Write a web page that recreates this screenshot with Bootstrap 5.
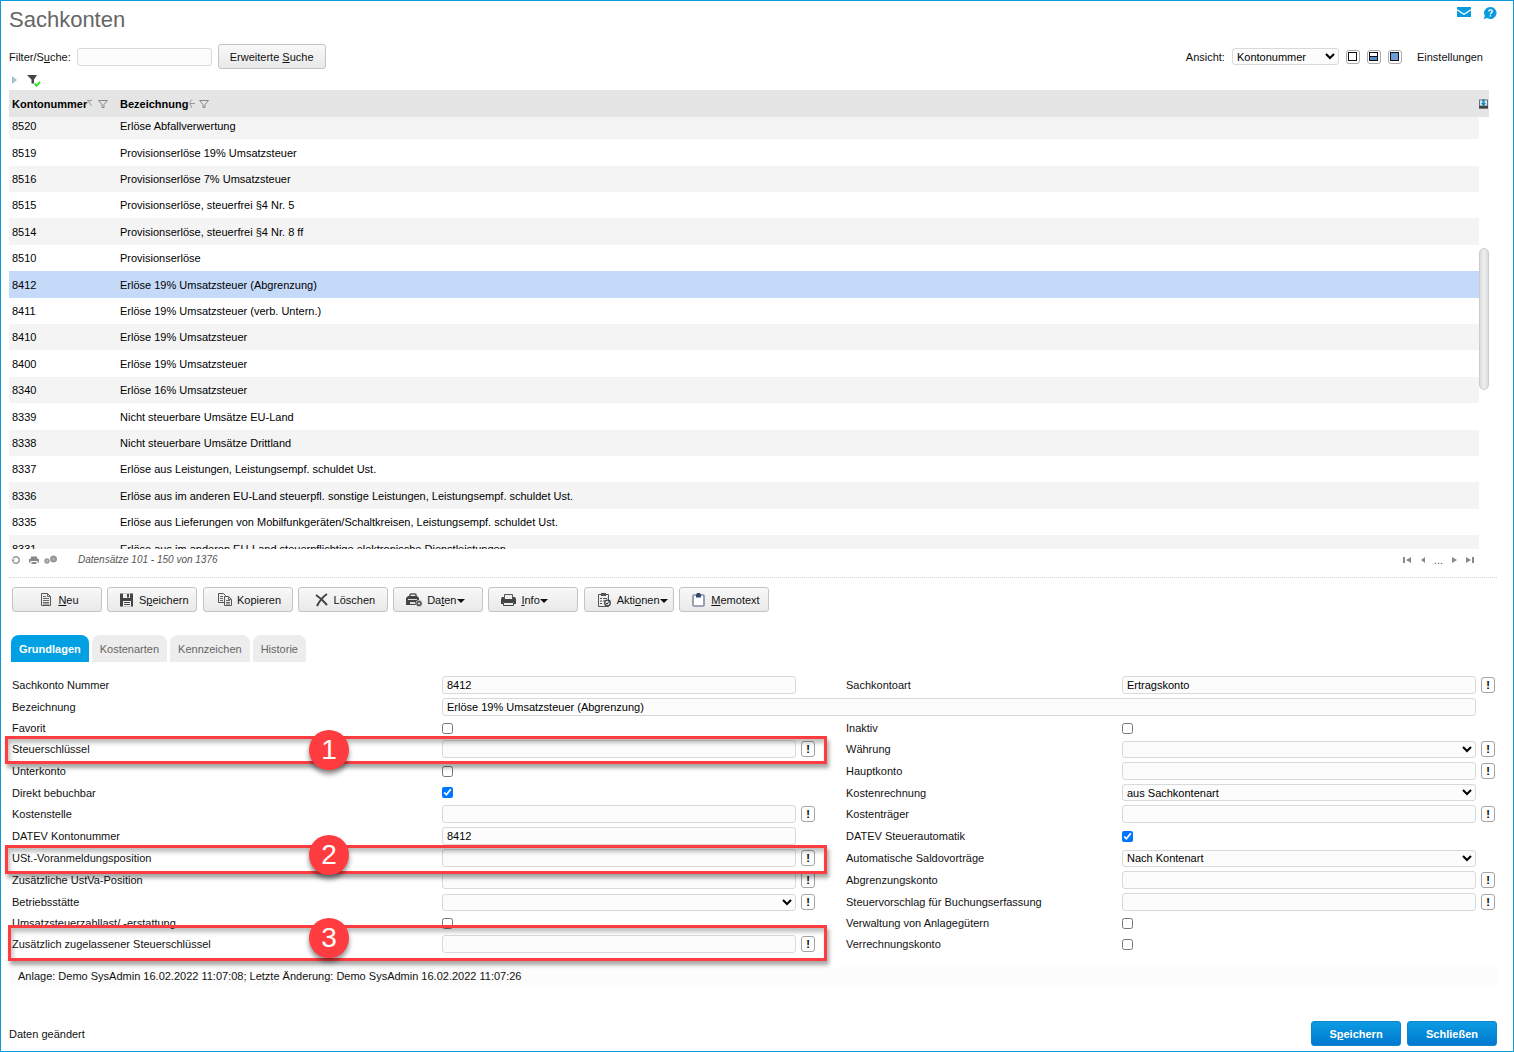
<!DOCTYPE html>
<html lang="de">
<head>
<meta charset="utf-8">
<meta name="viewport" content="width=device-width, initial-scale=1">
<title>Sachkonten</title>
<link href="https://cdn.jsdelivr.net/npm/bootstrap@5.3.0/dist/css/bootstrap.min.css" rel="stylesheet">
<style>
  body { font-family: "Liberation Sans", Arial, sans-serif; font-size: 11px; line-height: 14px; color: #111; background: #fff; }
  .page { min-height: 100vh; border: 1px solid #0a9bdc; padding: 4px 16px 5px 8px; }
  .page-title { font-size: 22px; line-height: 30px; color: #666; font-weight: 400; }
  .page a { color: inherit; text-decoration: none; }
  .top-icons { padding-top: 1px; gap: 12px; }
  svg { display: block; flex: none; }

  .field { font-size: 11px; line-height: 14px; height: 18px; min-height: 0; padding: 0 4px; border: 1px solid #d9d9d9; border-radius: 3px; background: #fcfcfc; color: #000; min-width: 0; width: 100%; }
  select.field { padding: 0; height: 17px; }
  .search-row { margin-top: 9px; padding-right: 14px; }
  .search-form { gap: 6px; }
  .search-field { width: 135px; }
  .view-field { width: 107px; }
  .view-group { gap: 7px; }
  .tool-btn { font-size: 11px; line-height: 14px; height: 25px; padding: 0 2px; color: #111; border: 1px solid #c4c4c4; border-radius: 3px; background: linear-gradient(#f8f8f8, #e9e9e9); }
  .tool-btn:hover { border-color: #999; color: #111; }
  .search-btn { padding: 0 11px; }
  .toolbar-row { margin-top: 9px; padding-left: 3px; }
  .toolbar-list { max-width: 757px; }
  .toolbar-list .tool-btn { width: 90px; gap: 4px; padding-left: 5px; }
  .toolbar-list .tool-menu { padding-left: 12px; }
  .tool-menu .dropdown-toggle::after { margin-left: 0; vertical-align: 1px; border-width: 4px 4px 0 4px; }
  .mini-btn { width: 14px; height: 14px; padding: 0; border: 1px solid #aaa; border-radius: 3px; background: #fff; }
  .info-btn { width: 14px; height: 16px; padding: 0; font-size: 11px; line-height: 13px; font-weight: 700; color: #000; border: 1px solid #a4a4a4; border-radius: 3px; background: #fff; }
  .filter-row { height: 21px; padding-left: 2px; gap: 8px; }
  .plain-btn { border: 0; padding: 0; background: none; }

  .list-box { height: 459px; overflow: hidden; margin-right: 8px; }
  .accounts { table-layout: fixed; color: #000; }
  .accounts th, .accounts td { padding: 0 3px; box-shadow: none; border: 0; background: #fff; color: #000; white-space: nowrap; }
  .accounts th { height: 27px; background: #e5e5e5; vertical-align: middle; }
  .accounts th:last-child, .accounts td:last-child { padding: 0; }
  .accounts td { height: 26px; }
  .accounts tr:nth-child(5n) td, .accounts tr:nth-child(5n+2) td { height: 27px; }
  .accounts tbody tr:first-child td { height: 22px; padding-bottom: 4px; }
  .accounts tr:nth-child(odd) td:not(:last-child) { background: #f4f4f4; }
  .accounts tr.chosen td:not(:last-child) { background: #c5d9f9; }
  .col-number { width: 108px; }
  .col-scroll { width: 10px; }
  .scroll-thumb { right: 0; top: 158px; width: 10px; height: 142px; border-radius: 5px; border: 1px solid #ccc; background: linear-gradient(90deg, #dcdcdc, #ececec 40%, #ececec 60%, #dcdcdc); }
  .status-row { height: 29px; padding: 0 22px 6px 2px; border-bottom: 1px dotted #d4d4d4; color: #555; }
  .status-text { font-size: 10px; margin-left: 20px; font-style: italic; }

  .area-tabs { gap: 3px; border: 0; padding-left: 2px; margin-top: 23px; }
  .area-tabs .nav-link { font-size: 11px; line-height: 14px; padding: 7px 8px 6px; border: 0; border-radius: 8px 8px 0 0; background: #ededed; color: #666; margin: 0; }
  .area-tabs .nav-link.active { background: #00a0e3; color: #fff; font-weight: 700; }

  .form-grid { display: grid; grid-template-columns: minmax(0,430fr) minmax(0,404fr) minmax(0,276fr) minmax(0,373fr); grid-template-rows: 22px 22px 20px 22px 22px 21px 22px 22px 22px 22px 22px 20px 22px; align-items: center; margin-top: 12px; padding-left: 3px; padding-right: 2px; }
  .form-grid label { white-space: nowrap; }
  .cell { display: grid; grid-template-columns: minmax(0,1fr) 14px; column-gap: 5px; align-items: center; }
  .cell-left { padding-right: 31px; }
  .cell-wide { grid-column: 2 / 5; padding-right: 0; }
  .tick { width: 11px; height: 11px; margin: 0; }
  .hint-frame { position: absolute; left: -7px; right: 19px; border: 3px solid #ff3d40; box-shadow: 2px 4px 4px rgba(0,0,0,.35), inset 2px 4px 4px rgba(0,0,0,.25); pointer-events: none; grid-column: 1 / 3; z-index: 1; }
  .hint-key { grid-row: 4 / 5; top: -2px; bottom: -4px; }
  .hint-vat { grid-row: 9 / 10; top: -2px; bottom: -5px; }
  .hint-extra { grid-row: 13 / 14; top: -8px; bottom: -6px; left: -4px; }
  .hint-number { position: absolute; left: 301px; top: 50%; width: 40px; height: 40px; margin-top: -20px; border-radius: 50%; background: #ff3d40; color: #fff; font-size: 28px; line-height: 40px; text-align: center; box-shadow: 0 4px 5px rgba(0,0,0,.45); }
  .hint-vat .hint-number, .hint-extra .hint-number { margin-top: -25px; }
  .hint-extra .hint-number { left: 298px; }

  .change-note { margin-top: 12px; padding: 2px 9px; background: #fcfcfc; }
  .footer-btns { gap: 6px; }
  .main-btn { width: 90px; height: 25px; padding: 0; font-size: 11px; line-height: 14px; font-weight: 700; color: #fff; border: 1px solid #0b86cf; border-radius: 3px; background: linear-gradient(#0c9ce2, #0078d0); }
  .main-btn:hover { color: #fff; }
</style>
<script src="https://cdn.jsdelivr.net/npm/bootstrap@5.3.0/dist/js/bootstrap.bundle.min.js"></script>
</head>
<body>
<div class="page d-flex flex-column">

  <header class="d-flex justify-content-between align-items-start">
    <h1 class="page-title m-0">Sachkonten</h1>
    <div class="top-icons d-flex">
      <a href="#" aria-label="Nachricht"><svg width="14" height="14" viewBox="0 0 14 14"><path d="M0 1h14v2L7 7.500 0 3z M0 4.500 7 9l7-4.500V11H0z" fill="#0a9bdc"/></svg></a>
      <a href="#" aria-label="Hilfe"><svg width="14" height="14" viewBox="0 0 14 14"><path d="M7.500 1a6 6 0 1 1-3.300 11L.500 13l1.400-3A6 6 0 0 1 7.500 1z" fill="#0a9bdc"/><path d="M5.700 5.400c.100-2.200 3.700-2 3.500.100-.1 1.300-1.600 1.200-1.700 2.700M7.300 9.200v1.400" stroke="#fff" stroke-width="1.400" fill="none"/></svg></a>
    </div>
  </header>

  <div class="search-row d-flex justify-content-between align-items-center">
    <form class="search-form d-flex align-items-center">
      <label for="q">Filter/S<u>u</u>che:</label>
      <input id="q" type="text" class="form-control field search-field">
      <button type="button" class="btn tool-btn search-btn">Erweiterte <u>S</u>uche</button>
    </form>
    <div class="view-group d-flex align-items-center">
      <label for="view">Ansicht:</label>
      <select id="view" class="field view-field"><option>Kontonummer</option></select>
      <button type="button" class="mini-btn" aria-label="Nur Liste"><svg width="12" height="12"><rect x="1.500" y="1.500" width="8" height="8" fill="#fff" stroke="#111"/></svg></button>
      <button type="button" class="mini-btn" aria-label="Geteilt"><svg width="12" height="12"><rect x="1.500" y="1.500" width="8" height="8" fill="#fff" stroke="#111"/><path d="M2 6h7v3H2z" fill="#5b87c8"/><path d="M2 5.500h7" stroke="#111"/></svg></button>
      <button type="button" class="mini-btn" aria-label="Nur Maske"><svg width="12" height="12"><rect x="1.500" y="1.500" width="8" height="8" fill="#6e9ad6" stroke="#111"/></svg></button>
      <a href="#" class="ms-2">Einstellungen</a>
    </div>
  </div>

  <div class="filter-row d-flex align-items-center">
    <button type="button" class="plain-btn" aria-label="Aufklappen"><svg width="7" height="8"><path d="M1 0l5 4-5 4z" fill="#a9bfca"/></svg></button>
    <button type="button" class="plain-btn" aria-label="Filter aktiv"><svg width="16" height="14" viewBox="0 0 16 14"><path d="M1 2h10L8 6.500v4H5.500v-4z" fill="#444"/><path d="M8.500 10.500l2 2.300 3.500-4" stroke="#21e821" stroke-width="1.800" fill="none"/></svg></button>
  </div>

  <div class="list-box position-relative">
    <table class="table accounts align-middle mb-0">
      <colgroup><col class="col-number"><col><col class="col-scroll"></colgroup>
      <thead>
        <tr>
          <th><div class="d-flex align-items-center">Kontonummer<svg width="7" height="10" viewBox="0 0 7 10"><path d="M0 1.500h5M1.500 2l3 5" stroke="#999" fill="none"/></svg><svg class="ms-1" width="10" height="10" viewBox="0 0 10 10"><path d="M.5 1.500h9L6 5.500v3H4v-3z" stroke="#888" fill="none"/></svg></div></th>
          <th><div class="d-flex align-items-center">Bezeichnung<svg width="7" height="10" viewBox="0 0 7 10"><path d="M4 .5Q1 3 2 5t2 4M2 4.500h5" stroke="#999" fill="none"/></svg><svg class="ms-1" width="10" height="10" viewBox="0 0 10 10"><path d="M.5 1.500h9L6 5.500v3H4v-3z" stroke="#888" fill="none"/></svg></div></th>
          <th><svg width="9" height="10" viewBox="0 0 9 10"><path d="M0 .5h9v9H0z" fill="#6a7379"/><path d="M1 1.500h7v5H1z" fill="#dbe9f0"/><path d="M3.500 0h2v4H7L4.500 7.500 2 4h1.500z" fill="#1686c4"/><path d="M0 7h9v2.500H0z" fill="#444"/></svg></th>
        </tr>
      </thead>
      <tbody>
        <tr><td>8520</td><td>Erlöse Abfallverwertung</td><td></td></tr>
        <tr><td>8519</td><td>Provisionserlöse 19% Umsatzsteuer</td><td></td></tr>
        <tr><td>8516</td><td>Provisionserlöse 7% Umsatzsteuer</td><td></td></tr>
        <tr><td>8515</td><td>Provisionserlöse, steuerfrei §4 Nr. 5</td><td></td></tr>
        <tr><td>8514</td><td>Provisionserlöse, steuerfrei §4 Nr. 8 ff</td><td></td></tr>
        <tr><td>8510</td><td>Provisionserlöse</td><td></td></tr>
        <tr class="chosen"><td>8412</td><td>Erlöse 19% Umsatzsteuer (Abgrenzung)</td><td></td></tr>
        <tr><td>8411</td><td>Erlöse 19% Umsatzsteuer (verb. Untern.)</td><td></td></tr>
        <tr><td>8410</td><td>Erlöse 19% Umsatzsteuer</td><td></td></tr>
        <tr><td>8400</td><td>Erlöse 19% Umsatzsteuer</td><td></td></tr>
        <tr><td>8340</td><td>Erlöse 16% Umsatzsteuer</td><td></td></tr>
        <tr><td>8339</td><td>Nicht steuerbare Umsätze EU-Land</td><td></td></tr>
        <tr><td>8338</td><td>Nicht steuerbare Umsätze Drittland</td><td></td></tr>
        <tr><td>8337</td><td>Erlöse aus Leistungen, Leistungsempf. schuldet Ust.</td><td></td></tr>
        <tr><td>8336</td><td>Erlöse aus im anderen EU-Land steuerpfl. sonstige Leistungen, Leistungsempf. schuldet Ust.</td><td></td></tr>
        <tr><td>8335</td><td>Erlöse aus Lieferungen von Mobilfunkgeräten/Schaltkreisen, Leistungsempf. schuldet Ust.</td><td></td></tr>
        <tr><td>8331</td><td>Erlöse aus im anderen EU-Land steuerpflichtige elektronische Dienstleistungen</td><td></td></tr>
      </tbody>
    </table>
    <div class="scroll-thumb position-absolute"></div>
  </div>

  <div class="status-row d-flex align-items-center">
    <button type="button" class="plain-btn" aria-label="Neu laden"><svg width="10" height="10" viewBox="0 0 10 10"><path d="M2 3.500a3.300 3.300 0 1 1 0 3" stroke="#999" stroke-width="1.500" fill="none"/><path d="M0 4.500h4L2 7z" fill="#999"/></svg></button>
    <button type="button" class="plain-btn ms-2" aria-label="Drucken"><svg width="10" height="10" viewBox="0 0 10 10"><path d="M2 1.500h6v2h1l1 1v3H8.500V6h-7v1.500H0v-3l1-1h1z M2.500 7h5v2h-5z" fill="#888"/></svg></button>
    <button type="button" class="plain-btn ms-1" aria-label="Optionen"><svg width="15" height="10" viewBox="0 0 15 10"><circle cx="4" cy="6" r="2.700" fill="#999"/><circle cx="10.500" cy="4" r="3.500" fill="#999"/><circle cx="4" cy="6" r=".8" fill="#ddd"/><circle cx="10.500" cy="4" r="1" fill="#bbb"/></svg></button>
    <span class="status-text">Datensätze 101 - 150 von 1376</span>
    <div class="d-flex align-items-center ms-auto gap-2">
      <button type="button" class="plain-btn" aria-label="Erste Seite"><svg width="9" height="8"><path d="M0 1h2v6H0zM8 1v6L3 4z" fill="#888"/></svg></button>
      <button type="button" class="plain-btn" aria-label="Zurück"><svg width="6" height="8"><path d="M5 1v6L1 4z" fill="#888"/></svg></button>
      <span>...</span>
      <button type="button" class="plain-btn" aria-label="Weiter"><svg width="7" height="8"><path d="M1 1v6l5-3z" fill="#888"/></svg></button>
      <button type="button" class="plain-btn" aria-label="Letzte Seite"><svg width="9" height="8"><path d="M6 1h2v6H6zM0 1v6l5-3z" fill="#888"/></svg></button>
    </div>
  </div>

  <div class="toolbar-row">
  <div class="toolbar-list d-flex justify-content-between">
    <button type="button" class="btn tool-btn d-flex align-items-center justify-content-center"><svg width="16" height="16" viewBox="0 0 16 16"><path d="M3.500 1.500h6l3 3v9h-9z" fill="#eee" stroke="#555"/><path d="M9.500 1.500v3h3M5 6.500h6M5 8.500h6M5 10.500h6M5 12h6M5 4.500h3" stroke="#666" fill="none"/></svg><span><u>N</u>eu</span></button>
    <button type="button" class="btn tool-btn d-flex align-items-center justify-content-center"><svg width="16" height="16" viewBox="0 0 16 16"><path d="M1 1.500h13v13H1z" fill="#444"/><path d="M4 1.500h7V6H4zM4 9h8v5.500H4z" fill="#f2f2f2"/><path d="M8 2h2v3.500H8zM5 10h6v1H5zM5 12h6v1H5z" fill="#444"/></svg><span>S<u>p</u>eichern</span></button>
    <button type="button" class="btn tool-btn d-flex align-items-center justify-content-center"><svg width="16" height="16" viewBox="0 0 16 16"><path d="M1.500 1.500h5l2 2v7h-7z" fill="#eee" stroke="#555"/><path d="M3 4.500h3M3 6.500h3M3 8.500h3" stroke="#666"/><path d="M7.500 4.500h4l3 3v6h-7z" fill="#eee" stroke="#555"/><path d="M11.500 4.500v3h3M9 8.500h4M9 10.500h4M9 12h4" stroke="#666" fill="none"/></svg><span>Kopieren</span></button>
    <button type="button" class="btn tool-btn d-flex align-items-center justify-content-center"><svg width="16" height="16" viewBox="0 0 16 16"><path d="M2 3q6 4 11 10M13 2Q7 6 3 14" stroke="#444" stroke-width="2" fill="none"/></svg><span>Löschen</span></button>
    <button type="button" class="btn tool-btn tool-menu d-flex align-items-center"><svg width="17" height="16" viewBox="0 0 17 16"><path d="M4 5V3q0-1 1-1h4q1 0 1 1v2" fill="none" stroke="#555" stroke-width="1.500"/><path d="M0 6l2-2h9l2 2v7H0z" fill="#444"/><path d="M2 7h9v1H2zM4 10h5v2H4z" fill="#ddd"/><circle cx="13" cy="11.500" r="3.200" fill="#555" stroke="#eee" stroke-width=".6"/><circle cx="13" cy="11.500" r="1" fill="#eee"/></svg><span class="dropdown-toggle">Da<u>t</u>en</span></button>
    <button type="button" class="btn tool-btn tool-menu d-flex align-items-center"><svg width="16" height="16" viewBox="0 0 16 16"><path d="M3.500 7V2.500h8V7" fill="#eee" stroke="#555"/><path d="M1 5h2v2h9V5h2l1 2v5h-2v-2H2v2H0V7z" fill="#444"/><path d="M2.500 10.500h10v3h-10z" fill="#eee" stroke="#444"/></svg><span class="dropdown-toggle"><u>I</u>nfo</span></button>
    <button type="button" class="btn tool-btn tool-menu d-flex align-items-center"><svg width="16" height="16" viewBox="0 0 16 16"><path d="M1.500 2.500h10v12h-10z" fill="#eee" stroke="#555"/><path d="M4 1h5v3H4z" fill="#555"/><path d="M3 6.500h2M6 6.500h4M3 9h2M6 9h2M3 11.500h2" stroke="#555"/><circle cx="10.500" cy="11" r="2.800" fill="#eee" stroke="#444" stroke-width="1.300"/><path d="M9 11l1 1.200L13 8" fill="none" stroke="#333"/></svg><span class="dropdown-toggle">Akti<u>o</u>nen</span></button>
    <button type="button" class="btn tool-btn d-flex align-items-center justify-content-center"><svg width="16" height="16" viewBox="0 0 16 16"><rect x="2" y="3" width="11" height="11" rx="1" fill="#fff" stroke="#7d8da3" stroke-width="1.600"/><path d="M5 3l1-2h3l1 2v2.500H5z" fill="#34496a"/></svg><span><u>M</u>emotext</span></button>
  </div>
  </div>

  <ul class="nav nav-tabs area-tabs">
    <li class="nav-item"><a class="nav-link active" href="#">Grundlagen</a></li>
    <li class="nav-item"><a class="nav-link" href="#">Kostenarten</a></li>
    <li class="nav-item"><a class="nav-link" href="#">Kennzeichen</a></li>
    <li class="nav-item"><a class="nav-link" href="#">Historie</a></li>
  </ul>

  <form class="form-grid position-relative">
    <label for="f1">Sachkonto Nummer</label>
    <div class="cell cell-left"><input id="f1" type="text" class="form-control field" value="8412"></div>
    <label for="g1">Sachkontoart</label>
    <div class="cell"><input id="g1" type="text" class="form-control field" value="Ertragskonto"><button type="button" class="info-btn">!</button></div>

    <label for="f2">Bezeichnung</label>
    <div class="cell cell-wide"><input id="f2" type="text" class="form-control field" value="Erlöse 19% Umsatzsteuer (Abgrenzung)"></div>

    <label for="f3">Favorit</label>
    <div class="cell cell-left"><input id="f3" type="checkbox" class="tick"></div>
    <label for="g3">Inaktiv</label>
    <div class="cell"><input id="g3" type="checkbox" class="tick"></div>

    <label for="f4">Steuerschlüssel</label>
    <div class="cell cell-left"><input id="f4" type="text" class="form-control field"><button type="button" class="info-btn">!</button></div>
    <label for="g4">Währung</label>
    <div class="cell"><select id="g4" class="field"><option></option></select><button type="button" class="info-btn">!</button></div>

    <label for="f5">Unterkonto</label>
    <div class="cell cell-left"><input id="f5" type="checkbox" class="tick"></div>
    <label for="g5">Hauptkonto</label>
    <div class="cell"><input id="g5" type="text" class="form-control field"><button type="button" class="info-btn">!</button></div>

    <label for="f6">Direkt bebuchbar</label>
    <div class="cell cell-left"><input id="f6" type="checkbox" class="tick" checked></div>
    <label for="g6">Kostenrechnung</label>
    <div class="cell"><select id="g6" class="field"><option>aus Sachkontenart</option></select></div>

    <label for="f7">Kostenstelle</label>
    <div class="cell cell-left"><input id="f7" type="text" class="form-control field"><button type="button" class="info-btn">!</button></div>
    <label for="g7">Kostenträger</label>
    <div class="cell"><input id="g7" type="text" class="form-control field"><button type="button" class="info-btn">!</button></div>

    <label for="f8">DATEV Kontonummer</label>
    <div class="cell cell-left"><input id="f8" type="text" class="form-control field" value="8412"></div>
    <label for="g8">DATEV Steuerautomatik</label>
    <div class="cell"><input id="g8" type="checkbox" class="tick" checked></div>

    <label for="f9">USt.-Voranmeldungsposition</label>
    <div class="cell cell-left"><input id="f9" type="text" class="form-control field"><button type="button" class="info-btn">!</button></div>
    <label for="g9">Automatische Saldovorträge</label>
    <div class="cell"><select id="g9" class="field"><option>Nach Kontenart</option></select></div>

    <label for="f10">Zusätzliche UstVa-Position</label>
    <div class="cell cell-left"><input id="f10" type="text" class="form-control field"><button type="button" class="info-btn">!</button></div>
    <label for="g10">Abgrenzungskonto</label>
    <div class="cell"><input id="g10" type="text" class="form-control field"><button type="button" class="info-btn">!</button></div>

    <label for="f11">Betriebsstätte</label>
    <div class="cell cell-left"><select id="f11" class="field"><option></option></select><button type="button" class="info-btn">!</button></div>
    <label for="g11">Steuervorschlag für Buchungserfassung</label>
    <div class="cell"><input id="g11" type="text" class="form-control field"><button type="button" class="info-btn">!</button></div>

    <label for="f12">Umsatzsteuerzahllast/ -erstattung</label>
    <div class="cell cell-left"><input id="f12" type="checkbox" class="tick"></div>
    <label for="g12">Verwaltung von Anlagegütern</label>
    <div class="cell"><input id="g12" type="checkbox" class="tick"></div>

    <label for="f13">Zusätzlich zugelassener Steuerschlüssel</label>
    <div class="cell cell-left"><input id="f13" type="text" class="form-control field"><button type="button" class="info-btn">!</button></div>
    <label for="g13">Verrechnungskonto</label>
    <div class="cell"><input id="g13" type="checkbox" class="tick"></div>

    <div class="hint-frame hint-key"><span class="hint-number">1</span></div>
    <div class="hint-frame hint-vat"><span class="hint-number">2</span></div>
    <div class="hint-frame hint-extra"><span class="hint-number">3</span></div>
  </form>

  <div class="change-note">Anlage: Demo SysAdmin 16.02.2022 11:07:08; Letzte Änderung: Demo SysAdmin 16.02.2022 11:07:26</div>

  <footer class="d-flex justify-content-between align-items-center mt-auto">
    <span>Daten geändert</span>
    <div class="footer-btns d-flex">
      <button type="button" class="btn main-btn">S<u>p</u>eichern</button>
      <button type="button" class="btn main-btn">Schließen</button>
    </div>
  </footer>
</div>
</body>
</html>
